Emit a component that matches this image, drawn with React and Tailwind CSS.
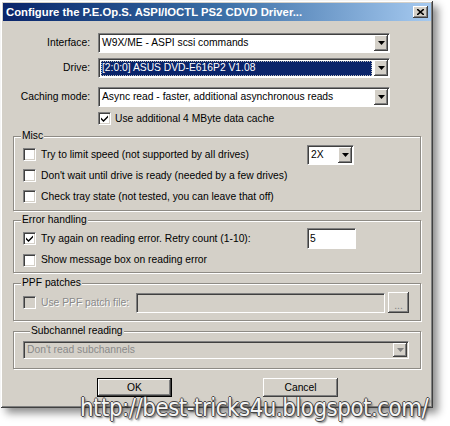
import React from "react";

const FONT = { fontFamily: '"Liberation Sans", Arial, sans-serif' };

function Arrow({ disabled }) {
  return (
    <svg width="7" height="4" viewBox="0 0 7 4">
      <path d="M0 0H7L3.5 4Z" fill={disabled ? "#808080" : "#000"} />
    </svg>
  );
}

function DropBtn({ disabled }) {
  return (
    <div className="flex h-full w-[14px] items-center justify-center bg-[#d4d0c8] shadow-[inset_-1px_-1px_0_#404040,inset_1px_1px_0_#fff,inset_-2px_-2px_0_#808080]">
      <Arrow disabled={disabled} />
    </div>
  );
}

function Sunken({ className = "", children }) {
  return (
    <div
      className={
        "flex border border-t-[#808080] border-l-[#808080] border-b-white border-r-white shadow-[inset_1px_1px_0_#404040] p-[1px] " +
        className
      }
    >
      {children}
    </div>
  );
}

function Combo({ text, selected, disabled, className = "" }) {
  return (
    <Sunken className={"h-[20px] bg-white " + className}>
      <div className="flex min-w-0 flex-1 items-center pl-[1px] pr-[2px]">
        <div
          className={
            "flex h-[15px] flex-1 items-center px-[1px] " +
            (selected ? "bg-[#0a246a] text-white outline outline-1 outline-dotted outline-[#c0c0c0] -outline-offset-1" : "")
          }
        >
          <span className={"whitespace-nowrap " + (disabled ? "text-[#808080]" : "")}>{text}</span>
        </div>
      </div>
      <DropBtn disabled={disabled} />
    </Sunken>
  );
}

function Check({ checked, disabled }) {
  return (
    <div
      className={
        "flex h-[13px] w-[13px] shrink-0 items-center justify-center border border-t-[#808080] border-l-[#808080] border-b-white border-r-white shadow-[inset_1px_1px_0_#404040,inset_-1px_-1px_0_#d4d0c8] " +
        (disabled ? "bg-[#d4d0c8]" : "bg-white")
      }
    >
      {checked && (
        <svg width="7" height="7" viewBox="0 0 7 7">
          <path d="M0 2.5L2.5 5L7 0.5V2.5L2.5 7L0 4.5Z" fill="#000" />
        </svg>
      )}
    </div>
  );
}

function Group({ label, className = "", children }) {
  return (
    <fieldset
      className={
        "ml-[10px] w-[408px] border border-[#8e8b85] shadow-[inset_1px_1px_0_#fff,1px_1px_0_#fff] " + className
      }
    >
      <legend className="ml-[7px] bg-[#d4d0c8] px-[1px] leading-[12px]">{label}</legend>
      {children}
    </fieldset>
  );
}

function Button({ label, def }) {
  return (
    <div
      className={
        "flex h-[19px] w-[75px] items-center justify-center bg-[#d4d0c8] " +
        (def
          ? "border border-black shadow-[inset_-1px_-1px_0_#404040,inset_1px_1px_0_#fff,inset_-2px_-2px_0_#808080]"
          : "shadow-[inset_-1px_-1px_0_#404040,inset_1px_1px_0_#fff,inset_-2px_-2px_0_#808080]")
      }
    >
      {label}
    </div>
  );
}

export default function App() {
  return (
    <div className="relative h-[426px] w-[450px] overflow-hidden bg-white text-[10.3px] text-black" style={FONT}>
      <div className="ml-[1px] mt-[1px] flex h-[407px] w-[432px] flex-col bg-[#d4d0c8] p-[2px] shadow-[inset_-1px_-1px_0_#404040,inset_1px_1px_0_#fff,inset_-2px_-2px_0_#808080,5px_5px_8px_rgba(0,0,0,0.45)]">
        {/* title bar */}
        <div className="flex h-[18px] items-center bg-gradient-to-r from-[#0a246a] via-[#3a6ea5] to-[#a6caf0] pl-[3px] pr-[3px]">
          <span className="flex-1 text-[11.3px] font-bold text-white">
            Configure the P.E.Op.S. ASPI/IOCTL PS2 CDVD Driver...
          </span>
          <div className="flex h-[12px] w-[15px] items-center justify-center bg-[#d4d0c8] shadow-[inset_-1px_-1px_0_#404040,inset_1px_1px_0_#fff,inset_-2px_-2px_0_#808080]">
            <svg width="7" height="6" viewBox="0 0 7 6">
              <path d="M0 0L7 6M7 0L0 6" stroke="#000" strokeWidth="1.6" />
            </svg>
          </div>
        </div>

        {/* top rows */}
        <div className="mt-[12px] flex h-[20px] items-center">
          <span className="w-[87px] text-right">Interface:</span>
          <Combo text="W9X/ME - ASPI scsi commands" className="ml-[8px] w-[292px]" />
        </div>
        <div className="mt-[5px] flex h-[20px] items-center">
          <span className="w-[87px] text-right">Drive:</span>
          <Combo text="[2:0:0] ASUS DVD-E616P2 V1.08" selected className="ml-[8px] w-[292px]" />
        </div>
        <div className="mt-[9px] flex h-[20px] items-center">
          <span className="w-[87px] text-right">Caching mode:</span>
          <Combo text="Async read - faster, additional asynchronous reads" className="ml-[8px] w-[292px]" />
        </div>
        <div className="mt-[5px] flex h-[13px] items-center pl-[95px]">
          <Check checked />
          <span className="ml-[4px]">Use additional 4 MByte data cache</span>
        </div>

        {/* Misc */}
        <Group label="Misc" className="mt-[5px] pb-[3px] pt-[2px]">
          <div className="flex h-[21px] items-center pl-[9px]">
            <Check />
            <span className="ml-[5px] w-[266px] whitespace-nowrap">Try to limit speed (not supported by all drives)</span>
            <Combo text="2X" className="h-[19px] w-[47px]" />
          </div>
          <div className="flex h-[21px] items-center pl-[9px]">
            <Check />
            <span className="ml-[5px] whitespace-nowrap">Don't wait until drive is ready (needed by a few drives)</span>
          </div>
          <div className="flex h-[21px] items-center pl-[9px]">
            <Check />
            <span className="ml-[5px] whitespace-nowrap">Check tray state (not tested, you can leave that off)</span>
          </div>
        </Group>

        {/* Error handling */}
        <Group label="Error handling" className="mt-[3px] pb-[2px] pt-[1px]">
          <div className="flex h-[23px] items-center pl-[9px]">
            <Check checked />
            <span className="ml-[5px] w-[266px] whitespace-nowrap">Try again on reading error. Retry count (1-10):</span>
            <Sunken className="h-[21px] w-[49px] items-center bg-white pl-[2px]">5</Sunken>
          </div>
          <div className="flex h-[20px] items-center pl-[9px]">
            <Check />
            <span className="ml-[5px] whitespace-nowrap">Show message box on reading error</span>
          </div>
        </Group>

        {/* PPF patches */}
        <Group label="PPF patches" className="mt-[4px] pb-[7px] pt-[3px]">
          <div className="flex h-[21px] items-center pl-[9px]">
            <Check disabled />
            <span className="ml-[5px] w-[90px] shrink-0 whitespace-nowrap text-[#8a8a8a] [text-shadow:1px_1px_0_#fff]">
              Use PPF patch file:
            </span>
            <Sunken className="ml-[5px] h-[20px] w-[249px] bg-[#d4d0c8]" />
            <div className="ml-[3px] flex h-[21px] w-[21px] items-end justify-center pb-[4px] text-[#808080] shadow-[inset_-1px_-1px_0_#404040,inset_1px_1px_0_#fff,inset_-2px_-2px_0_#808080]">
              <span className="leading-[6px]">...</span>
            </div>
          </div>
        </Group>

        {/* Subchannel */}
        <Group label="Subchannel reading" className="mt-[4px] pb-[9px] pl-[9px] pr-[11px] pt-[4px]">
          <Sunken className="h-[18px] bg-[#d4d0c8]">
            <div className="flex flex-1 items-center pl-[2px] text-[#8a8a8a]">Don't read subchannels</div>
            <DropBtn disabled />
          </Sunken>
        </Group>

        {/* buttons */}
        <div className="mt-[9px] flex">
          <div className="ml-[94px]">
            <Button label="OK" def />
          </div>
          <div className="ml-[91px]">
            <Button label="Cancel" />
          </div>
        </div>
      </div>

      {/* watermark overlay */}
      <div
        className="absolute left-[80px] top-[394px] origin-left scale-x-[0.89] whitespace-nowrap text-[24px] leading-[28px] tracking-[-0.5px] text-[#f4f4f4] [text-shadow:1px_0_0_#444,-1px_0_0_#444,0_1px_0_#444,0_-1px_0_#444,2px_2px_2px_rgba(0,0,0,0.5)]"
        style={{ fontFamily: '"DejaVu Sans", Verdana, sans-serif' }}
      >
        http://best-tricks4u.blogspot.com/
      </div>
    </div>
  );
}
